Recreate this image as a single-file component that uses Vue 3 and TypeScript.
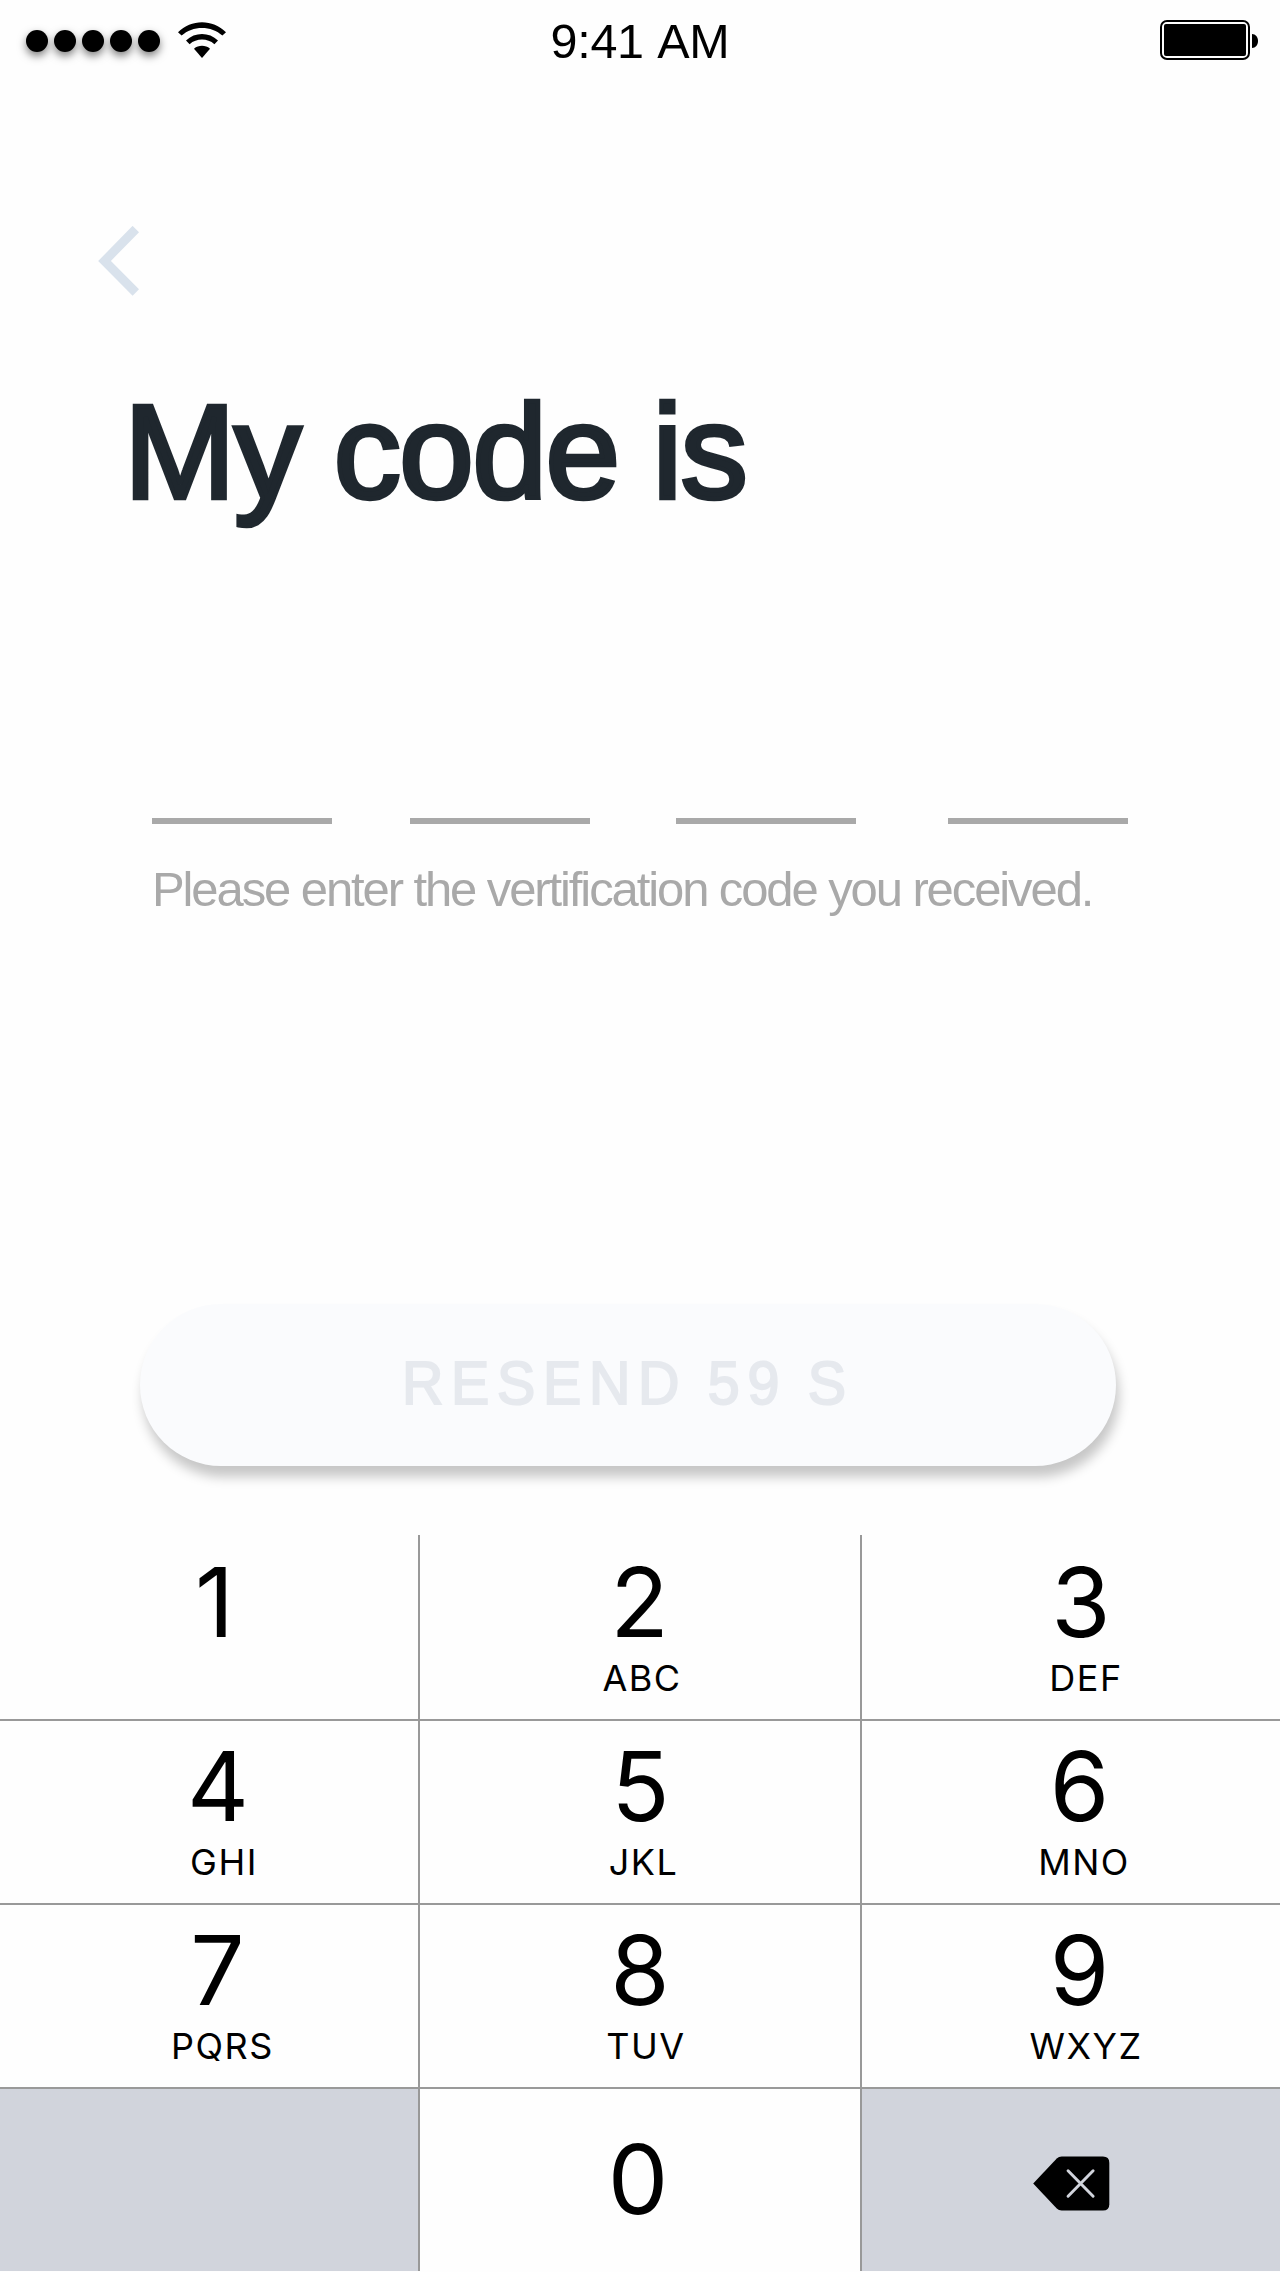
<script setup lang="ts">
interface Key {
  digit: string
  letters?: string
  /* optical correction of the digit and of its letters, in px */
  digitShift?: number
  lettersShift?: number
}

const rows: Key[][] = [
  [
    { digit: '1', digitShift: -3 },
    { digit: '2', letters: 'ABC', digitShift: -0.5, lettersShift: -1 },
    { digit: '3', letters: 'DEF', digitShift: 1, lettersShift: 3 },
  ],
  [
    { digit: '4', letters: 'GHI', digitShift: 0.5, lettersShift: 3.5 },
    { digit: '5', letters: 'JKL', digitShift: 0.5, lettersShift: 0.5 },
    { digit: '6', letters: 'MNO', digitShift: -0.5, lettersShift: 1 },
  ],
  [
    { digit: '7', letters: 'PQRS', lettersShift: 2 },
    { digit: '8', letters: 'TUV', lettersShift: 3 },
    { digit: '9', letters: 'WXYZ', digitShift: -0.5, lettersShift: 3 },
  ],
]

const shift = (px = 0) => ({ transform: `translateX(${px}px)` })
</script>

<template>
  <main class="screen">
    <header class="status">
      <div class="signal">
        <i v-for="n in 5" :key="n" class="dot"></i>
        <svg class="wifi" width="48" height="36" viewBox="0 0 48 36">
          <path d="M0 10.2C13-3.2 35-3.2 48 10.2L44.4 13.6C33.5 3.3 14.5 3.3 3.6 13.6Z" />
          <path d="M8 18.4C17 9.8 31 9.8 40 18.4L36.4 22.2C29.5 16 18.5 16 11.6 22.2Z" />
          <path d="M16 26.7C20.5 22.9 27.5 22.9 32 26.7L24 36Z" />
        </svg>
      </div>
      <time class="clock">9:41 AM</time>
      <svg class="battery" width="98" height="40" viewBox="0 0 98 40">
        <rect x="1" y="1" width="88" height="38" rx="6" fill="none" stroke="#000" stroke-width="2" />
        <rect x="4" y="4" width="82" height="32" rx="2" />
        <path d="M92 14C95.500 14 98 17 98 21C98 25 95.500 28 92 28Z" />
      </svg>
    </header>

    <button class="back" aria-label="Back">
      <svg width="42" height="70" viewBox="0 0 42 70">
        <path d="M37.800 3L6.500 35L37.800 66.500" fill="none" stroke="#d9e2ec" stroke-width="9" />
      </svg>
    </button>

    <h1 class="title">My code is</h1>

    <div class="slots">
      <span class="slot"></span>
      <span class="slot"></span>
      <span class="slot"></span>
      <span class="slot"></span>
    </div>
    <p class="hint">Please enter the vertification code you received.</p>

    <button class="resend"><span class="resend-text">RESEND 59 S</span></button>

    <section class="keypad">
      <div v-for="(row, r) in rows" :key="r" class="row">
        <div v-for="key in row" :key="key.digit" class="key">
          <span class="digit" :style="shift(key.digitShift)">{{ key.digit }}</span>
          <span v-if="key.letters" class="letters" :style="shift(key.lettersShift)">{{ key.letters }}</span>
        </div>
      </div>
      <div class="row last">
        <div class="key muted"></div>
        <div class="key"><span class="digit" :style="shift(-2)">0</span></div>
        <div class="key muted">
          <svg class="erase" width="77" height="55" viewBox="0 0 78 56">
            <path d="M0 28L24 2.500Q26 .5 29 .5H71Q77.500 .5 77.500 7V49Q77.500 55.500 71 55.500H29Q26 55.500 24 53.500Z" />
            <path d="M35.500 15L61 41M61 15L35.500 41" fill="none" stroke="#d1d4dc" stroke-width="3" stroke-linecap="round" />
          </svg>
        </div>
      </div>
    </section>
  </main>
</template>

<style>
body {
  margin: 0;
  background: #fefefe;
}
</style>

<style scoped>
.screen {
  display: flex;
  flex-direction: column;
  width: 1280px;
  height: 2272px;
  overflow: hidden;
  background: #fefefe;
  font-family: "Liberation Sans", Arial, sans-serif;
  color: #000;
}
button {
  border: 0;
  padding: 0;
  font: inherit;
}
.status {
  display: grid;
  grid-template-columns: 1fr auto 1fr;
  height: 82px;
}
.signal {
  display: flex;
  align-items: flex-start;
  gap: 6px;
  padding: 30px 0 0 26px;
}
.dot {
  width: 22px;
  height: 22px;
  border-radius: 50%;
  background: #000;
  box-shadow: 0 4px 8px rgba(0, 0, 0, 0.5);
}
.wifi {
  margin: -8px 0 0 12px;
}
.clock {
  padding-top: 1px;
  font-size: 48.5px;
  line-height: 80px;
  letter-spacing: -0.3px;
  word-spacing: 3px;
}
.battery {
  justify-self: end;
  margin: 20px 22px 0 0;
}
.back {
  align-self: flex-start;
  display: flex;
  margin: 144px 0 0 98px;
  background: none;
}
.title {
  margin: 76px 0 0 124px;
  font-size: 134px;
  font-weight: 400;
  line-height: 160px;
  letter-spacing: -1.4px;
  word-spacing: -2px;
  white-space: nowrap;
  color: #1f272e;
  -webkit-text-stroke: 4.5px #1f272e;
}
.slots {
  display: flex;
  margin: 286px 0 0 152px;
}
.slot {
  width: 180px;
  height: 6px;
  background: #a9a9a9;
}
.slot:nth-child(2) {
  margin-left: 78px;
}
.slot:nth-child(3) {
  margin-left: 86px;
}
.slot:nth-child(4) {
  margin-left: 92px;
}
.hint {
  margin: 35px 0 0 152px;
  font-size: 49px;
  line-height: 60px;
  letter-spacing: -2.1px;
  white-space: nowrap;
  color: #a9a9a9;
}
.resend {
  display: flex;
  align-items: center;
  width: 976px;
  height: 162px;
  margin: 385px 0 0 140px;
  padding: 0 0 5px 262px;
  box-sizing: border-box;
  border-radius: 81px;
  background: #fafbfd;
  box-shadow: 3px 11px 12px rgba(0, 0, 0, 0.22);
}
.resend-text {
  font-size: 61px;
  line-height: 80px;
  letter-spacing: 8.2px;
  word-spacing: -3.2px;
  white-space: nowrap;
  color: #e6e9ee;
  -webkit-text-stroke: 2px #e6e9ee;
  transform: scaleX(0.94);
  transform-origin: left;
}
.keypad {
  margin-top: 69px;
  font-family: Inter, "Liberation Sans", sans-serif;
}
.row {
  display: grid;
  grid-template-columns: 420px 442px 418px;
  height: 184px;
  box-sizing: border-box;
}
.row + .row {
  border-top: 2px solid #999;
}
.key {
  display: flex;
  flex-direction: column;
  align-items: center;
  padding-top: 19px;
  box-sizing: border-box;
}
.row + .row .key {
  padding-top: 17px;
}
.row.last .key {
  padding-top: 42px;
}
.key:not(:last-child) {
  border-right: 2px solid #999;
}
.key:first-child {
  padding-left: 17px;
}
.key:last-child {
  padding-left: 18px;
}
.digit {
  font-size: 96px;
  line-height: 96px;
}
.letters {
  margin: 10px 0 0 6px;
  font-size: 36px;
  line-height: 36px;
  letter-spacing: 1.5px;
}
.muted {
  background: #d1d4dc;
}
.erase {
  margin-top: 25px;
  margin-right: 17px;
}
</style>
